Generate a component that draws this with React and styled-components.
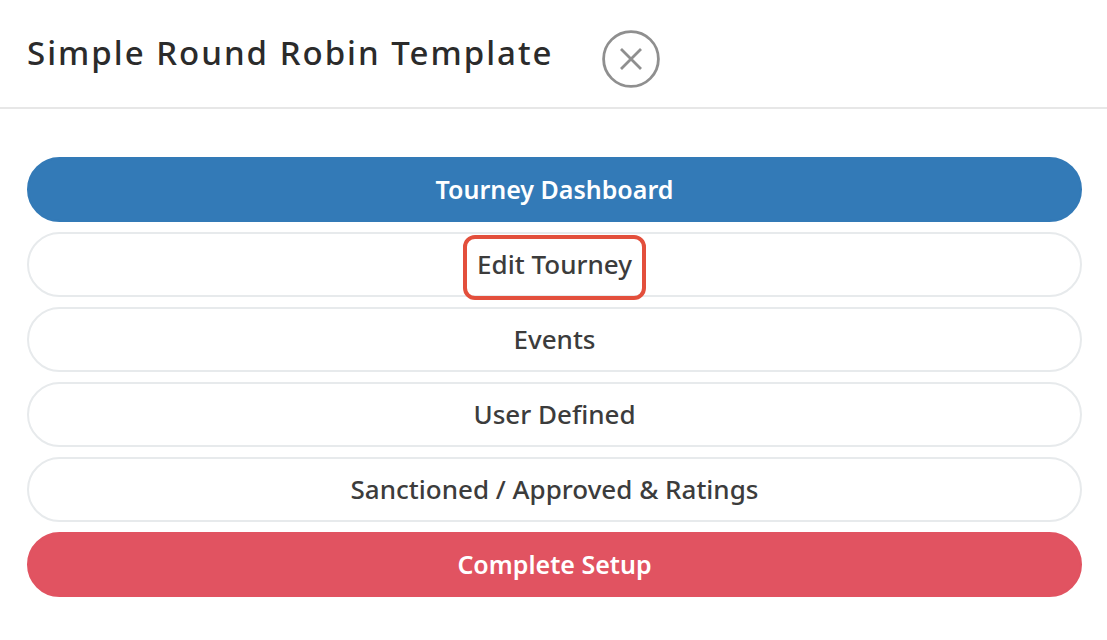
import styled, { createGlobalStyle, css } from 'styled-components';

const GlobalStyle = createGlobalStyle`
  * {
    box-sizing: border-box;
  }

  body {
    margin: 0;
    background: #fff;
    color: #333;
    font-family: 'Noto Sans', 'Open Sans', sans-serif;
  }
`;

const Header = styled.header`
  display: flex;
  align-items: flex-start;
  gap: 48px;
  padding: 30px 25px 19px 27px;
  border-bottom: 2px solid #e7e7e7;
`;

const Title = styled.h1`
  margin: 0;
  color: #2b2b2b;
  font-size: 33px;
  font-weight: 500;
  line-height: 46px;
  letter-spacing: 2px;
`;

const CloseButton = styled.button`
  display: flex;
  flex-shrink: 0;
  width: 58px;
  height: 58px;
  padding: 0;
  border: none;
  border-radius: 50%;
  background: transparent;
  color: #8f8f8f;
  cursor: pointer;
`;

const Menu = styled.nav`
  display: flex;
  flex-direction: column;
  gap: 10px;
  padding: 48px 25px 44px 27px;
`;

const variants = {
  primary: css`
    border-color: #337ab7;
    background: #337ab7;
    color: #fff;
    font-size: 25px;
    font-weight: 600;
  `,
  danger: css`
    border-color: #e15361;
    background: #e15361;
    color: #fff;
    font-size: 25px;
    font-weight: 600;
  `,
  plain: css`
    border-color: #e7eaec;
    background: #fff;
    color: #3c3c3c;
    font-size: 26px;
    font-weight: 500;
  `,
};

const MenuButton = styled.button`
  display: flex;
  align-items: center;
  justify-content: center;
  width: 100%;
  height: 65px;
  padding: 0 24px 2px;
  border: 2px solid;
  border-radius: 33px;
  font-family: inherit;
  line-height: 36px;
  cursor: pointer;
  ${({ $variant }) => variants[$variant]}
`;

const Label = styled.span`
  position: relative;
`;

const Highlight = styled.span`
  position: absolute;
  inset: -11px -14px -18px;
  border: 4px solid #e34f3c;
  border-radius: 12px;
  pointer-events: none;
`;

const items = [
  { label: 'Tourney Dashboard', variant: 'primary' },
  { label: 'Edit Tourney', variant: 'plain', highlighted: true },
  { label: 'Events', variant: 'plain' },
  { label: 'User Defined', variant: 'plain' },
  { label: 'Sanctioned / Approved & Ratings', variant: 'plain' },
  { label: 'Complete Setup', variant: 'danger' },
];

function CloseIcon() {
  return (
    <svg width="58" height="58" viewBox="0 0 58 58" fill="none" stroke="currentColor" aria-hidden="true">
      <circle cx="29" cy="29" r="27.4" strokeWidth="2.8" />
      <path d="M19 19 39 39M39 19 19 39" strokeWidth="2.8" />
    </svg>
  );
}

function App() {
  return (
    <>
      <GlobalStyle />
      <Header>
        <Title>Simple Round Robin Template</Title>
        <CloseButton type="button" aria-label="Close">
          <CloseIcon />
        </CloseButton>
      </Header>
      <Menu>
        {items.map(({ label, variant, highlighted }) => (
          <MenuButton key={label} type="button" $variant={variant}>
            <Label>
              {label}
              {highlighted && <Highlight />}
            </Label>
          </MenuButton>
        ))}
      </Menu>
    </>
  );
}

export default App;
